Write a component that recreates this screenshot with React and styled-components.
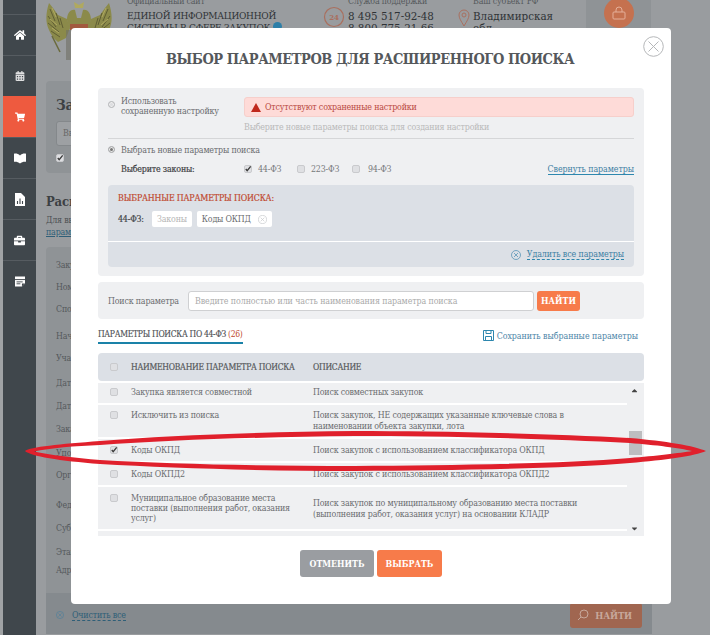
import React from "react";
import styled, { createGlobalStyle } from "styled-components";
import { FaHome, FaCalendarAlt, FaShoppingCart, FaBriefcase, FaCaretUp, FaCaretDown } from "react-icons/fa";

const slab = `"DejaVu Serif Condensed", "DejaVu Serif", "Liberation Serif", serif`;

const Global = createGlobalStyle`
  html, body { margin: 0; padding: 0; background: #999c9f; }
  * { box-sizing: border-box; }
`;

const Screen = styled.div`
  position: relative;
  width: 710px;
  height: 635px;
  overflow: hidden;
  display: flex;
  background: #999c9f;
  font-family: ${slab};
  font-size: 8.8px;
  letter-spacing: -0.18px;
  color: #6a6c6f;
`;

const Strip = styled.div`
  width: 3px;
  background: #a0a3a5;
`;

const Sidebar = styled.nav`
  width: 33px;
  padding-top: 14px;
  background: #40474c;
  display: flex;
  flex-direction: column;
`;

const NavItem = styled.div`
  height: 41px;
  display: flex;
  align-items: center;
  justify-content: center;
  color: #fff;
  border-top: 1px solid ${(p) => (p.$active ? "#ee5a3f" : "#565c61")};
  background: ${(p) => (p.$active ? "#ee5a3f" : "transparent")};
`;

const Main = styled.main`
  width: 606px;
  margin-left: 10px;
  margin-top: -5px;
  display: flex;
  flex-direction: column;
`;

const Header = styled.header`
  height: 86px;
  display: flex;
  align-items: flex-start;
  color: #2f3336;
`;

const Eagle = styled.svg`
  width: 66px;
  height: 66px;
  flex: none;
`;

const SiteInfo = styled.div`
  width: 196px;
  margin-left: 15px;
  line-height: 12px;
`;

const Muted = styled.div`
  color: #55595c;
  margin-bottom: 3px;
`;

const Strong = styled.div`
  font-size: 10px;
  letter-spacing: -0.25px;
`;

const Big = styled.div`
  font-size: 11.5px;
  letter-spacing: 0;
`;

const InfoDot = styled.span`
  display: inline-block;
  width: 9px;
  height: 9px;
  margin-left: 3px;
  border-radius: 50%;
  background: #2d7fa8;
`;

const PhoneBlock = styled.div`
  width: 135px;
  display: flex;
  gap: 3px;
  line-height: 12px;
`;

const RegionBlock = styled.div`
  width: 128px;
  display: flex;
  gap: 3px;
  line-height: 12px;
`;

const LockCell = styled.div`
  width: 65px;
  height: 40px;
  background: #8f9396;
  display: flex;
  justify-content: center;
`;

const LockCircle = styled.div`
  width: 30px;
  height: 30px;
  margin-top: 3px;
  border-radius: 50%;
  background: #c5714f;
  display: flex;
  align-items: center;
  justify-content: center;
`;

const SearchCard = styled.section`
  height: 92px;
  padding: 15px 10px;
  border-radius: 4px;
  background: #8f9396;
`;

const CardTitle = styled.h2`
  margin: 0 0 7px;
  font-size: 15px;
  font-weight: 700;
  color: #3c4043;
`;

const GhostInput = styled.div`
  height: 25px;
  padding: 6px;
  background: #9da0a3;
  border: 1px solid #84888b;
  border-radius: 3px;
  color: #666;
  margin-bottom: 8px;
`;

const SectionTitle = styled.h3`
  margin: 21px 0 5px;
  font-size: 13px;
  font-weight: 700;
  color: #3c4043;
`;

const SectionText = styled.p`
  margin: 0;
  line-height: 12px;
  color: #4b4f52;
`;

const ParamLink = styled.span`
  color: #2f5f78;
  text-decoration: underline;
`;

const FilterCard = styled.section`
  margin-top: 9px;
  height: 387px;
  border-radius: 4px;
  background: #8f9396;
  display: flex;
  flex-direction: column;
`;

const FilterList = styled.div`
  flex: 1;
  padding: 13px 10px 0;
  overflow: hidden;
  color: #55595c;
  line-height: 10px;
`;

const FilterLabel = styled.div`
  height: ${(p) => p.$h}px;
`;

const FilterFooter = styled.div`
  height: 41px;
  padding: 3px 10px 0;
  background: #858a8e;
  display: flex;
  justify-content: space-between;
  align-items: center;
`;

const ClearGroup = styled.div`
  display: flex;
  align-items: center;
  gap: 8px;
`;

const ClearLink = styled.span`
  color: #2f5f78;
  border-bottom: 1px dashed #2f5f78;
`;

const DimButton = styled.div`
  width: 72px;
  height: 25px;
  border-radius: 3px;
  background: #a06650;
  color: #c7a89b;
  font-weight: 700;
  font-size: 9.5px;
  display: flex;
  align-items: center;
  justify-content: flex-end;
  gap: 6px;
  padding-right: 10px;
`;

const Modal = styled.div`
  position: absolute;
  left: 71px;
  top: 28px;
  width: 600px;
  height: 576px;
  padding: 0 27px;
  background: #fff;
  border-radius: 4px;
  display: flex;
  flex-direction: column;
`;

const CloseButton = styled.svg`
  position: absolute;
  right: 7px;
  top: 8px;
  width: 21px;
  height: 21px;
`;

const Title = styled.h1`
  margin: 0;
  height: 60px;
  padding: 21px 2px 0 0;
  font-size: 14.5px;
  letter-spacing: -0.45px;
  line-height: 20px;
  font-weight: 700;
  text-align: center;
  color: #55585b;
`;

const Panel = styled.section`
  padding: 9px 10px;
  background: #eff0f2;
  border-radius: 4px;
`;

const SavedRow = styled.div`
  display: flex;
  padding-bottom: 5px;
  border-bottom: 1px solid #d5d6d8;
`;

const RadioLabel = styled.label`
  width: 136px;
  display: flex;
  gap: 6px;
  line-height: 9.5px;
`;

const Radio = styled.span`
  flex: none;
  width: 7px;
  height: 7px;
  margin-top: ${(p) => (p.$on ? 0 : 4)}px;
  border-radius: 50%;
  border: 1px solid #b4b6b8;
  background: ${(p) => (p.$on ? "#777" : "#dcdde0")};
  box-shadow: inset 0 0 0 1px #eee;
`;

const SavedInfo = styled.div`
  flex: 1;
`;

const Alert = styled.div`
  height: 20px;
  padding-left: 6px;
  display: flex;
  align-items: center;
  gap: 4px;
  background: #fedbd8;
  border: 1px solid #f6cfcb;
  border-radius: 3px;
  color: #b9493f;
`;

const Hint = styled.div`
  margin-top: 5px;
  line-height: 11px;
  color: #b9b9b9;
`;

const NewRow = styled.div`
  margin-top: 4px;
  height: 13px;
  display: flex;
  gap: 6px;
  align-items: center;
`;

const LawsRow = styled.div`
  margin-top: 5px;
  height: 16px;
  padding-left: 13px;
  display: flex;
  align-items: center;
`;

const LawsLabel = styled.span`
  width: 123px;
  color: #3f4245;
  -webkit-text-stroke: 0.2px #3f4245;
`;

const Law = styled.label`
  width: ${(p) => p.$w}px;
  display: flex;
  align-items: center;
  gap: ${(p) => p.$gap || 6}px;
  color: #77797c;
`;

const Box = styled.span`
  flex: none;
  position: relative;
  display: inline-block;
  width: 8px;
  height: 8px;
  border: 1px solid #c9cacd;
  border-radius: 2px;
  background: #dfe0e3;
`;

const Tick = styled.svg`
  position: absolute;
  left: -1px;
  top: -1px;
  width: 8px;
  height: 8px;
`;

const CollapseLink = styled.a`
  margin-left: auto;
  color: #3d7fa3;
  border-bottom: 1px solid #2d87ae;
  line-height: 10px;
  letter-spacing: -0.07px;
`;

const Selected = styled.div`
  margin-top: 8px;
  height: 82px;
  border-radius: 4px;
  background: #dce0e6;
  display: flex;
  flex-direction: column;
`;

const SelectedTitle = styled.div`
  padding: 8px 10px 0;
  color: #c0492f;
  -webkit-text-stroke: 0.2px #c0492f;
  line-height: 11px;
`;

const ChipsRow = styled.div`
  margin-top: 7px;
  padding-left: 10px;
  height: 16px;
  display: flex;
  align-items: center;
  gap: 5px;
  color: #44474a;
`;

const LawName = styled.span`
  width: 29px;
  white-space: nowrap;
  -webkit-text-stroke: 0.2px #44474a;
`;

const Chip = styled.span`
  height: 16px;
  padding: 0 5px;
  display: flex;
  align-items: center;
  gap: 7px;
  background: #fff;
  border-radius: 2px;
  color: ${(p) => (p.$off ? "#b5b5b5" : "#6a6c6f")};
`;

const SelectedFooter = styled.div`
  margin-top: 14px;
  flex: 1;
  border-top: 1px solid #fff;
  padding-right: 10px;
  display: flex;
  align-items: center;
  justify-content: flex-end;
  gap: 6px;
`;

const DashedLink = styled.a`
  color: #3d7fa3;
  border-bottom: 1px dashed #2d87ae;
  line-height: 10px;
  letter-spacing: -0.1px;
`;

const SearchPanel = styled(Panel)`
  margin-top: 6px;
  height: 37px;
  display: flex;
  align-items: center;
`;

const SearchLabel = styled.span`
  width: 80px;
  white-space: nowrap;
`;

const SearchInput = styled.div`
  width: 346px;
  height: 20px;
  padding-left: 6px;
  display: flex;
  align-items: center;
  background: #fff;
  border: 1px solid #cfd0d2;
  border-radius: 3px;
  color: #aaa;
  letter-spacing: -0.1px;
`;

const FindButton = styled.button`
  margin-left: 3px;
  width: 43px;
  height: 20px;
  padding: 0;
  border: none;
  border-radius: 3px;
  background: #f77b4a;
  color: #fff;
  font-family: inherit;
  font-size: 8.8px;
  font-weight: 700;
`;

const Tabs = styled.div`
  margin-top: 8px;
  height: 23px;
  display: flex;
  justify-content: space-between;
`;

const Tab = styled.div`
  box-sizing: content-box;
  height: 13px;
  padding-top: 2px;
  border-bottom: 2px solid #1a82a8;
  color: #4e5154;
  font-size: 8.5px;
  line-height: 11px;
  letter-spacing: -0.3px;
  -webkit-text-stroke: 0.15px #4e5154;
  white-space: nowrap;
`;

const TabCount = styled.span`
  color: #c0492f;
  -webkit-text-stroke: 0;
`;

const SaveLink = styled.a`
  margin-right: 6px;
  height: 15px;
  padding-top: 2px;
  display: flex;
  align-items: center;
  gap: 3px;
  color: #4d86a8;
  letter-spacing: -0.04px;
`;

const TableHead = styled.div`
  margin-top: 3px;
  height: 28px;
  display: flex;
  align-items: center;
  padding-left: 12px;
  background: #dce0e6;
  border-radius: 4px;
  color: #55585b;
  -webkit-text-stroke: 0.2px #55585b;
  font-size: 8.5px;
  letter-spacing: -0.25px;
`;

const NameCol = styled.div`
  width: 182px;
  padding-right: 16px;
  margin-left: 13px;
  line-height: 10.2px;
  white-space: ${(p) => (p.$single ? "nowrap" : "normal")};
`;

const Scroll = styled.div`
  margin-top: 2px;
  height: 153px;
  display: flex;
  overflow: hidden;
  background: #eff0f2;
`;

const Rows = styled.div`
  width: 529px;
`;

const Row = styled.div`
  height: ${(p) => p.$h}px;
  padding: ${(p) => p.$pad}px 0 0 12px;
  display: flex;
  border-bottom: 2px solid #fff;
  line-height: 10.5px;
`;

const RowBox = styled(Box)`
  margin-top: 1px;
`;

const Desc = styled.div`
  flex: 1;
  padding-top: ${(p) => p.$top || 0}px;
  padding-right: 40px;
`;

const ScrollTrack = styled.div`
  flex: 1;
  position: relative;
  display: flex;
  flex-direction: column;
  align-items: center;
  justify-content: space-between;
  padding: 3px 2px 3px 0;
  color: #444;
  font-size: 9px;
`;

const Thumb = styled.div`
  position: absolute;
  left: 2px;
  top: 48px;
  width: 13px;
  height: 24px;
  background: #bdbec0;
`;

const Actions = styled.div`
  margin-top: 14px;
  display: flex;
  justify-content: center;
  gap: 3px;
`;

const ActionButton = styled.button`
  width: ${(p) => p.$w}px;
  height: 27px;
  padding: 0;
  border: none;
  border-radius: 3px;
  background: ${(p) => (p.$primary ? "#f77b4a" : "#9a9da1")};
  color: #fff;
  font-family: inherit;
  font-size: 8.8px;
  font-weight: 700;
`;

const Scribble = styled.svg`
  position: absolute;
  left: 0;
  top: 0;
  width: 710px;
  height: 635px;
  pointer-events: none;
`;

const filters = [
  ["Закупка", 22], ["Номер закупки", 22], ["Способ определения поставщика (размещения)", 27],
  ["Начальная цена", 22], ["Участник", 25], ["Дата размещения", 23], ["Дата окончания", 23],
  ["Заказчик", 24], ["Уполномоченный орган", 22], ["Организация, осуществляющая размещение", 30],
  ["Федеральный округ", 23], ["Субъект РФ", 24], ["Этап закупки", 18], ["Адрес места поставки работ", 20],
];

const rows = [
  { name: "Закупка является совместной", desc: "Поиск совместных закупок", h: 22, pad: 4 },
  { name: "Исключить из поиска", desc: "Поиск закупок, НЕ содержащих указанные ключевые слова в наименовании объекта закупки, лота", h: 34, pad: 5 },
  { name: "Коды ОКПД", desc: "Поиск закупок с использованием классификатора ОКПД", h: 24, pad: 6, checked: true },
  { name: "Коды ОКПД2", desc: "Поиск закупок с использованием классификатора ОКПД2", h: 24, pad: 6 },
  { name: "Муниципальное образование места поставки (выполнения работ, оказания услуг)", desc: "Поиск закупок по муниципальному образованию места поставки (выполнения работ, оказания услуг) на основании КЛАДР", h: 44, pad: 6, top: 5 },
];

const CrossCircle = ({ size = 10, color = "#c9cbce" }) => (
  <svg width={size} height={size} viewBox="0 0 20 20" fill="none" stroke={color} strokeWidth="1.6">
    <circle cx="10" cy="10" r="9" />
    <path d="M6 6l8 8M14 6l-8 8" />
  </svg>
);

const Check = () => (
  <Tick viewBox="0 0 9 9" fill="none" stroke="#3a3a3a" strokeWidth="1.5">
    <path d="M2 4.500l1.600 2L7.500 1.500" />
  </Tick>
);

const Book = () => (
  <svg width="12" height="12" viewBox="0 0 14 13" fill="#fff">
    <path d="M0 1.500C2.500 1 5 1.800 7 3.500 9 1.800 11.500 1 14 1.500V11c-2.500-.4-5 .3-7 2-2-1.700-4.500-2.400-7-2z" />
  </svg>
);

const ChartFile = () => (
  <svg width="10" height="13" viewBox="0 0 10 13">
    <path fill="#fff" d="M0 0h6l4 4v9H0z" />
    <path stroke="#40474c" strokeWidth="1.100" d="M2.500 11V8M5 11V5.500M7.500 11V8" />
  </svg>
);

const Ledger = () => (
  <svg width="10" height="11" viewBox="0 0 13 13">
    <path fill="#fff" d="M0 0h13v9l-4 4H0z" />
    <path stroke="#40474c" strokeWidth="1.200" d="M0 4h13M2 7h8M2 9.500h5" />
    <path fill="#40474c" d="M9 9h4l-4 4z" />
  </svg>
);

const Wing = () => (
  <g>
    <path fill="#8b8a4a" d="M49 3C46 12 45 22 49 30c2 5 5 9 9 12l8-4 4-10-3-9-9-4-5-7z" />
    <path fill="none" stroke="#5f5d33" strokeWidth="1" d="M50 9l5 12M48 16l8 11M48 23l11 9M51 31l9 6M56 13l4 12M60 18l3 10" />
    <path fill="none" stroke="#b0a95f" strokeWidth="1" d="M52 8l4 9M50 19l7 6M52 28l7 5" />
    <path fill="none" stroke="#6b6a3d" strokeWidth="1.500" d="M52 36l8 16" />
  </g>
);

const App = () => (
  <>
    <Global />
    <Screen>
      <Strip />
      <Sidebar>
        <NavItem><FaHome size={12} /></NavItem>
        <NavItem><FaCalendarAlt size={10} color="#dfe0e1" /></NavItem>
        <NavItem $active><FaShoppingCart size={10} /></NavItem>
        <NavItem><Book /></NavItem>
        <NavItem><ChartFile /></NavItem>
        <NavItem><FaBriefcase size={11} /></NavItem>
        <NavItem><Ledger /></NavItem>
      </Sidebar>
      <Main>
        <Header>
          <Eagle viewBox="46 -5 66 66">
            <Wing />
            <g transform="translate(158 0) scale(-1 1)"><Wing /></g>
            <path fill="#8b8a4a" d="M70 30l-3-10c0-6 3-11 8-10l2 8h4l2-8c5-1 8 4 8 10l-3 10z" />
            <path fill="#b0a95f" d="M74 2l5 3 5-3-1 6h-8z" />
            <path fill="#a25a3f" d="M70 24h18v6H70z" />
            <path fill="#6f7065" d="M66 30h26v30H66z" opacity=".6" />
          </Eagle>
          <SiteInfo>
            <Muted>Официальный сайт</Muted>
            <Strong>ЕДИНОЙ ИНФОРМАЦИОННОЙ</Strong>
            <Strong>СИСТЕМЫ В СФЕРЕ ЗАКУПОК<InfoDot /></Strong>
          </SiteInfo>
          <PhoneBlock>
            <svg width="22" height="24" viewBox="0 0 22 24" fill="none" stroke="#a9705f" strokeWidth="1.200" style={{ marginTop: 9 }}>
              <circle cx="11" cy="13" r="9.500" />
              <text x="11" y="16" textAnchor="middle" fontSize="8" fontWeight="700" fill="#a9705f" stroke="none">24</text>
            </svg>
            <div>
              <Muted>Служба поддержки</Muted>
              <Big>8 495 517-92-48</Big>
              <Big>8 800 775-21-66</Big>
            </div>
          </PhoneBlock>
          <RegionBlock>
            <svg width="12" height="18" viewBox="0 0 12 18" fill="none" stroke="#a9705f" strokeWidth="1" style={{ marginTop: 14 }}>
              <path d="M6 17C3 12 1 9 1 6a5 5 0 0 1 10 0c0 3-2 6-5 11z" />
              <circle cx="6" cy="6" r="2" />
            </svg>
            <div>
              <Muted>Ваш субъект РФ</Muted>
              <Big>Владимирская</Big>
              <Big>обл.</Big>
            </div>
          </RegionBlock>
          <LockCell>
            <LockCircle>
              <svg width="14" height="14" viewBox="0 0 14 14" fill="none" stroke="#e5b09a" strokeWidth="1">
                <rect x="1" y="6" width="12" height="7" rx="1" />
                <path d="M4 6V4a3 3 0 0 1 6 0v2" />
              </svg>
            </LockCircle>
          </LockCell>
        </Header>
        <SearchCard>
          <CardTitle>Закупки</CardTitle>
          <GhostInput>Введите</GhostInput>
          <Box><Check /></Box>
        </SearchCard>
        <SectionTitle>Расширенный поиск</SectionTitle>
        <SectionText>Для выбора</SectionText>
        <SectionText><ParamLink>параметров</ParamLink></SectionText>
        <FilterCard>
          <FilterList>
            {filters.map(([label, h]) => (
              <FilterLabel key={label} $h={h}>{label}</FilterLabel>
            ))}
          </FilterList>
          <FilterFooter>
            <ClearGroup>
              <CrossCircle size={8} color="#4f7f9c" />
              <ClearLink>Очистить все</ClearLink>
            </ClearGroup>
            <DimButton>
              <svg width="12" height="12" viewBox="0 0 12 12" fill="none" stroke="#c7a89b">
                <circle cx="7" cy="5" r="4" />
                <path d="M4 8l-3 3" />
              </svg>
              НАЙТИ
            </DimButton>
          </FilterFooter>
        </FilterCard>
      </Main>

      <Modal>
        <CloseButton viewBox="0 0 21 21" fill="none" stroke="#b5b7b9" strokeWidth="1">
          <circle cx="10.500" cy="10.500" r="9.800" />
          <path d="M5.500 5.500l10 10M15.500 5.500l-10 10" />
        </CloseButton>
        <Title>ВЫБОР ПАРАМЕТРОВ ДЛЯ РАСШИРЕННОГО ПОИСКА</Title>
        <Panel>
          <SavedRow>
            <RadioLabel>
              <Radio />
              <span>Использовать<br />сохраненную настройку</span>
            </RadioLabel>
            <SavedInfo>
              <Alert>
                <svg width="10" height="9" viewBox="0 0 9 8"><path fill="#c0281c" d="M4.500 0L9 8H0z" /></svg>
                Отсутствуют сохраненные настройки
              </Alert>
              <Hint>Выберите новые параметры поиска для создания настройки</Hint>
            </SavedInfo>
          </SavedRow>
          <NewRow><Radio $on />Выбрать новые параметры поиска</NewRow>
          <LawsRow>
            <LawsLabel>Выберите законы:</LawsLabel>
            <Law $w={53}><Box><Check /></Box>44-ФЗ</Law>
            <Law $w={55}><Box />223-ФЗ</Law>
            <Law $w={50} $gap={8}><Box />94-ФЗ</Law>
            <CollapseLink>Свернуть параметры</CollapseLink>
          </LawsRow>
          <Selected>
            <SelectedTitle>ВЫБРАННЫЕ ПАРАМЕТРЫ ПОИСКА:</SelectedTitle>
            <ChipsRow>
              <LawName>44-ФЗ:</LawName>
              <Chip $off>Законы</Chip>
              <Chip>Коды ОКПД <CrossCircle size={9} /></Chip>
            </ChipsRow>
            <SelectedFooter>
              <CrossCircle size={10} color="#5a96b8" />
              <DashedLink>Удалить все параметры</DashedLink>
            </SelectedFooter>
          </Selected>
        </Panel>
        <SearchPanel>
          <SearchLabel>Поиск параметра</SearchLabel>
          <SearchInput>Введите полностью или часть наименования параметра поиска</SearchInput>
          <FindButton>НАЙТИ</FindButton>
        </SearchPanel>
        <Tabs>
          <Tab>ПАРАМЕТРЫ ПОИСКА ПО 44-ФЗ <TabCount>(26)</TabCount></Tab>
          <SaveLink>
            <svg width="11" height="11" viewBox="0 0 11 11" fill="none" stroke="#2d87ae">
              <path d="M.5.500h10v10H.500zM3 .500v3h5v-3M2.500 10.500v-4h6v4" />
            </svg>
            Сохранить выбранные параметры
          </SaveLink>
        </Tabs>
        <TableHead>
          <Box />
          <NameCol $single>НАИМЕНОВАНИЕ ПАРАМЕТРА ПОИСКА</NameCol>
          <div>ОПИСАНИЕ</div>
        </TableHead>
        <Scroll>
          <Rows>
            {rows.map((r) => (
              <Row key={r.name} $h={r.h} $pad={r.pad}>
                <RowBox>{r.checked && <Check />}</RowBox>
                <NameCol>{r.name}</NameCol>
                <Desc $top={r.top}>{r.desc}</Desc>
              </Row>
            ))}
          </Rows>
          <ScrollTrack>
            <FaCaretUp />
            <Thumb />
            <FaCaretDown />
          </ScrollTrack>
        </Scroll>
        <Actions>
          <ActionButton $w={74}>ОТМЕНИТЬ</ActionButton>
          <ActionButton $w={65} $primary>ВЫБРАТЬ</ActionButton>
        </Actions>
      </Modal>

      <Scribble viewBox="0 0 710 635">
        <path
          fill="#e0202c"
          fillRule="evenodd"
          d="M25 451C30 447 60 444 100 441C170 435 260 432 355 431C430 431 540 433 630 438C665 441 695 446 706 451C695 456 665 460 630 463C560 469 450 470 355 471C260 471 170 468 100 464C60 461 30 456 25 451Z
             M34 451.500C50 448 75 446 100 445C170 440 260 437 355 436C430 436 540 438 630 443C655 445 680 448 692 451C680 453 655 456 630 458C560 464 450 465 355 466C260 466 170 464 100 460C75 458 50 455 34 451.500Z"
        />
      </Scribble>
    </Screen>
  </>
);

export default App;
